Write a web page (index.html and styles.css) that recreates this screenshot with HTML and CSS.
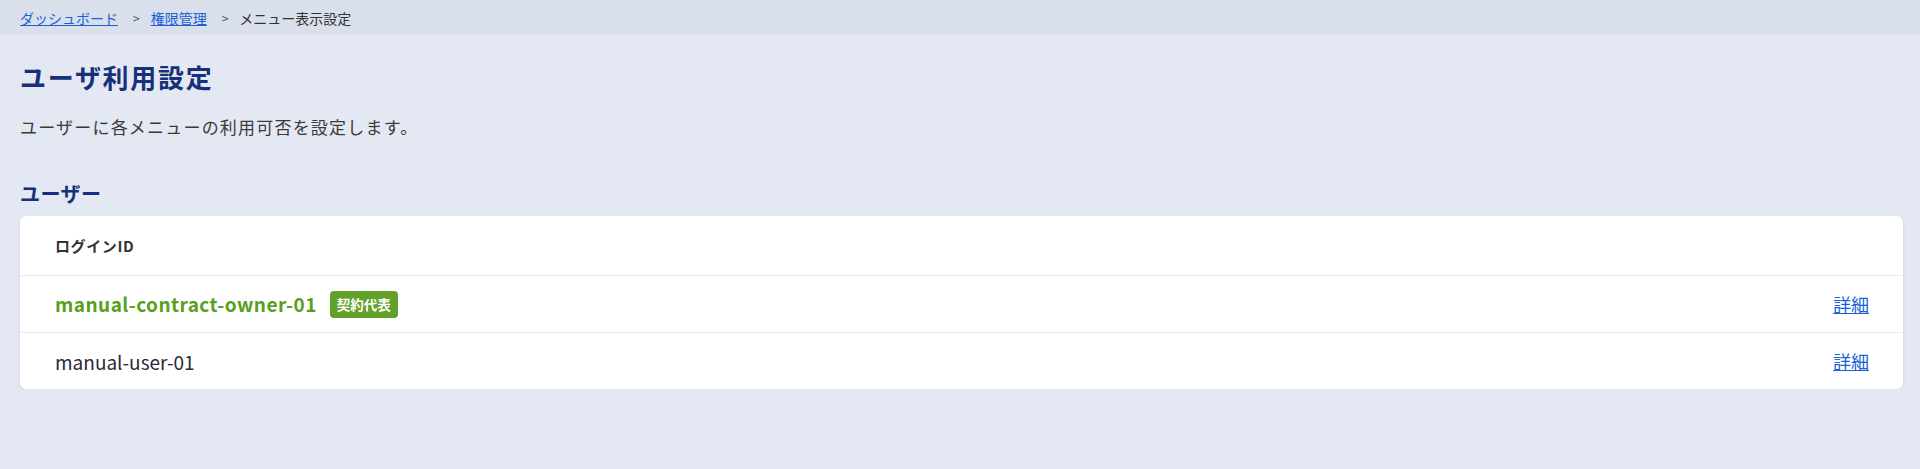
FILE: index.html
```html
<!DOCTYPE html>
<html lang="ja">
<head>
  <meta charset="UTF-8">
  <meta name="viewport" content="width=device-width, initial-scale=1.0">
  <title>ユーザ利用設定</title>
  <link rel="stylesheet" href="styles.css">
</head>
<body>
  <nav class="breadcrumb">
    <a href="#">ダッシュボード</a>
    <span class="sep">&gt;</span>
    <a href="#">権限管理</a>
    <span class="sep">&gt;</span>
    <span class="current">メニュー表示設定</span>
  </nav>

  <main class="content">
    <h1 class="page-title">ユーザ利用設定</h1>
    <p class="page-desc">ユーザーに各メニューの利用可否を設定します。</p>

    <h2 class="section-title">ユーザー</h2>
    <div class="card">
      <div class="row head">
        <span>ログインID</span>
      </div>
      <div class="row">
        <span class="login owner">manual-contract-owner-01 <span class="badge">契約代表</span></span>
        <a href="#" class="detail">詳細</a>
      </div>
      <div class="row">
        <span class="login">manual-user-01</span>
        <a href="#" class="detail">詳細</a>
      </div>
    </div>
  </main>
</body>
</html>
```

FILE: styles.css
```css
body {
  margin: 0;
  font-family: "Noto Sans CJK JP", "Noto Sans", sans-serif;
  background: #e4e8f2;
  color: #333;
}
.breadcrumb {
  height: 35px;
  display: flex;
  align-items: center;
  padding: 0 20px;
  background: #dadfec;
  font-size: 14px;
}
.breadcrumb a {
  color: #1a5fd6;
  padding-right: 4px;
}
.breadcrumb .sep {
  margin: 0 11px;
  color: #555;
  font-size: 12px;
}
.breadcrumb .current {
  color: #333;
}
.content {
  padding: 0 17px 0 20px;
}
.page-title {
  margin: 0;
  padding-top: 22px;
  font-size: 26px;
  line-height: 40px;
  letter-spacing: 1.7px;
  color: #17307a;
}
.page-desc {
  margin: 18px 0 0;
  font-size: 17px;
  line-height: 24px;
  letter-spacing: 1.2px;
  color: #3a3a3a;
}
.section-title {
  margin: 41px 0 0;
  font-size: 20px;
  line-height: 28px;
  letter-spacing: 0.5px;
  color: #17307a;
}
.card {
  margin-top: 8px;
  background: #fff;
  border-radius: 6px;
  box-shadow: 0 1px 3px rgba(30, 40, 80, 0.12);
}
.row {
  display: flex;
  align-items: center;
  justify-content: space-between;
  height: 56px;
  padding: 0 34px 0 35px;
  border-top: 1px solid #e8ebf2;
}
.row.head {
  height: 59px;
  border-top: none;
  font-size: 15px;
  letter-spacing: 0.6px;
  font-weight: bold;
  color: #333;
}
.login {
  font-size: 19px;
  color: #2a2a3a;
}
.login.owner {
  color: #58a01c;
  font-weight: bold;
  letter-spacing: 0.45px;
}
.badge {
  display: inline-block;
  margin-left: 8px;
  padding: 0 7px;
  font-size: 13.5px;
  line-height: 27px;
  letter-spacing: 0;
  font-weight: bold;
  color: #fff;
  background: #62a02a;
  border-radius: 4px;
  vertical-align: 2px;
}
.detail {
  font-size: 18px;
  color: #1a5fd6;
}
```
